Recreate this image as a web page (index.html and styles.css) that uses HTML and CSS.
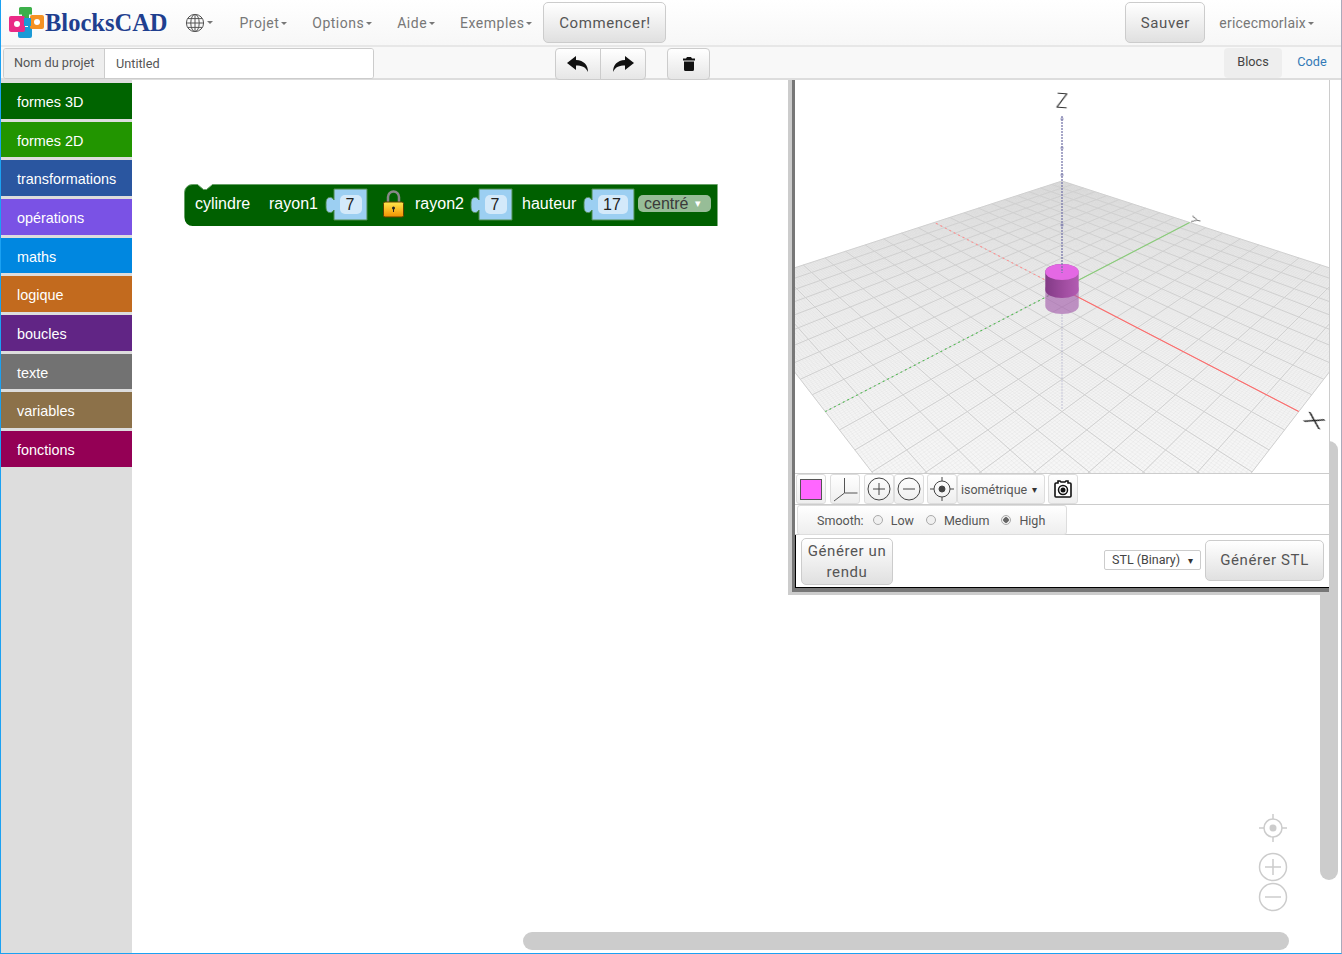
FILE: index.html
```html
<!DOCTYPE html>
<html lang="fr">
<head>
  <meta charset="UTF-8">
  <meta name="viewport" content="width=device-width, initial-scale=1.0">
  <title>BlocksCAD</title>
  <link rel="stylesheet" href="styles.css">
</head>
<body>
<div class="app">

  <nav class="navbar">
    <a class="brand">
      <svg class="brand-icon" width="36" height="32" viewBox="0 0 36 32">
        <path d="M10 1.500a1.500 1.500 0 0 1 1.500-1.500h10a1.500 1.500 0 0 1 1.500 1.500v6h-3v4h-7v-4h-3z" fill="#3cb04a"/>
        <path d="M11 20h8v-2h4v11a2 2 0 0 1-2 2h-10a2 2 0 0 1-2-2v-5a3 3 0 0 1 2-4z" fill="#1b9ad6"/>
        <rect x="0" y="9" width="16" height="16" rx="2" fill="#ea2a86"/>
        <rect x="21" y="8" width="14" height="14" rx="2" fill="#f59222"/>
        <rect x="15" y="11" width="7" height="8" fill="#1b9ad6"/>
        <circle cx="8" cy="17" r="3" fill="#fff"/>
        <circle cx="28" cy="15" r="3" fill="#fff"/>
      </svg>
      <span class="brand-name">BlocksCAD</span>
    </a>
    <a class="nav-globe">
      <svg width="20" height="20" viewBox="0 0 20 20" fill="none" stroke="#555" stroke-width="1">
        <circle cx="10" cy="10" r="8.600"/>
        <ellipse cx="10" cy="10" rx="4.200" ry="8.600"/>
        <path d="M10 1.400v17.200M1.400 10h17.200M2.600 5.600h14.800M2.600 14.400h14.800"/>
      </svg>
      <span class="caret"></span>
    </a>
    <a class="nav-link nav-projet">Projet<span class="caret"></span></a>
    <a class="nav-link">Options<span class="caret"></span></a>
    <a class="nav-link">Aide<span class="caret"></span></a>
    <a class="nav-link">Exemples<span class="caret"></span></a>
    <button class="btn btn-start">Commencer!</button>
    <div class="nav-right">
      <button class="btn btn-save">Sauver</button>
      <a class="nav-link nav-user">ericecmorlaix<span class="caret"></span></a>
    </div>
  </nav>

  <div class="projectbar">
    <div class="project-name">
      <span class="project-label">Nom du projet</span>
      <span class="project-input">Untitled</span>
    </div>
    <div class="edit-tools">
      <button class="tool tool-undo" aria-label="undo">
        <svg width="22" height="18" viewBox="0 0 22 18"><path d="M9 1 0 8l9 7v-4.400c5.500 0 9.500 1.200 12 6.400 0-7-4-11.500-12-12z" fill="#111"/></svg>
      </button>
      <button class="tool tool-redo" aria-label="redo">
        <svg width="22" height="18" viewBox="0 0 22 18"><path d="M13 1l9 7-9 7v-4.400c-5.500 0-9.500 1.200-12 6.400 0-7 4-11.500 12-12z" fill="#111"/></svg>
      </button>
      <button class="tool tool-trash" aria-label="delete">
        <svg width="12" height="14" viewBox="0 0 12 14"><path d="M4 0h4l1 1.500h3v2h-12v-2h3zM1 4.500h10v8a1.500 1.500 0 0 1-1.500 1.500h-7a1.500 1.500 0 0 1-1.500-1.500z" fill="#111"/></svg>
      </button>
    </div>
    <div class="code-tabs">
      <a class="code-tab active">Blocs</a>
      <a class="code-tab">Code</a>
    </div>
  </div>

  <div class="main">
    <ul class="toolbox">
      <li class="cat cat-3d">formes 3D</li>
      <li class="cat cat-2d">formes 2D</li>
      <li class="cat cat-trans">transformations</li>
      <li class="cat cat-ops">opérations</li>
      <li class="cat cat-math">maths</li>
      <li class="cat cat-logic">logique</li>
      <li class="cat cat-loop">boucles</li>
      <li class="cat cat-text">texte</li>
      <li class="cat cat-var">variables</li>
      <li class="cat cat-func">fonctions</li>
    </ul>
    <div class="workspace">
      <svg class="block" width="540" height="46" viewBox="0 0 540 46">
        <defs>
          <linearGradient id="lock-gold" x1="0" y1="0" x2="0" y2="1">
            <stop offset="0" stop-color="#ffe84d"/>
            <stop offset="1" stop-color="#f09000"/>
          </linearGradient>
        </defs>
        <path class="block-body" d="M0.500 8.500a8 8 0 0 1 8-8h5l6 5h3l6-5h505v41.500h-525a8 8 0 0 1-8-8z"/>
        <path class="block-edge" d="M0.500 33.500v-25a8 8 0 0 1 8-8h5l6 5h3l6-5h505"/>

        <text class="block-text" x="11" y="25">cylindre</text>
        <text class="block-text" x="85" y="25">rayon1</text>
        <path class="socket" d="M150 5h33v31h-33v-10c-1 2-3 3-5 2.500c-3-1-3-4-3-7.500s0-6.500 3-7.500c2-.5 4 .5 5 2.500z"/>
        <rect class="field" x="156" y="11" width="22" height="19" rx="5"/>
        <text class="field-text" x="166" y="26">7</text>

        <g transform="translate(199 6)">
          <path d="M5 12V7a5.500 5.500 0 0 1 11 0v5" fill="none" stroke="#888" stroke-width="2.500"/>
          <rect x="0.500" y="12" width="20" height="15" rx="1.500" fill="url(#lock-gold)" stroke="#5c4000"/>
          <circle cx="10.500" cy="18" r="1.500" fill="#222"/>
          <rect x="10" y="18" width="1" height="4" fill="#222"/>
        </g>

        <text class="block-text" x="231" y="25">rayon2</text>
        <path class="socket" d="M295 5h33v31h-33v-10c-1 2-3 3-5 2.500c-3-1-3-4-3-7.500s0-6.500 3-7.500c2-.5 4 .5 5 2.500z"/>
        <rect class="field" x="301" y="11" width="22" height="19" rx="5"/>
        <text class="field-text" x="311" y="26">7</text>

        <text class="block-text" x="338" y="25">hauteur</text>
        <path class="socket" d="M408 5h42v31h-42v-10c-1 2-3 3-5 2.500c-3-1-3-4-3-7.500s0-6.500 3-7.500c2-.5 4 .5 5 2.500z"/>
        <rect class="field" x="414" y="11" width="30" height="19" rx="5"/>
        <text class="field-text" x="428" y="26">17</text>

        <rect class="dropdown" x="454" y="11" width="73" height="17" rx="5"/>
        <text class="dropdown-text" x="460" y="25">centré</text>
        <text class="dropdown-arrow" x="511" y="23">▾</text>
      </svg>

      <div class="zoom-controls">
        <svg width="30" height="100" viewBox="0 0 30 100" fill="none" stroke="#ccc" stroke-width="1.500">
          <circle cx="15" cy="15" r="9"/>
          <circle cx="15" cy="15" r="3.500" fill="#ccc" stroke="none"/>
          <path d="M15 1v5M15 24v5M1 15h5M24 15h5"/>
          <circle cx="15" cy="54" r="13.500"/>
          <path d="M7 54h16M15 46v16"/>
          <circle cx="15" cy="84" r="13.500"/>
          <path d="M7 84h16"/>
        </svg>
      </div>
      <div class="scroll-v"></div>
      <div class="scroll-h"></div>
    </div>
  </div>

  <section class="viewer">
    <div class="viewer-inner">
      <div class="stage">
        <canvas id="floor" width="534" height="393"></canvas>
        <span class="axis-label axis-z">Z</span>
        <span class="axis-label axis-y">Y</span>
        <span class="axis-label axis-x">X</span>
      </div>

      <div class="view-tools">
        <button class="vbtn vbtn-color"><span class="swatch"></span></button>
        <button class="vbtn vbtn-axes">
          <svg width="26" height="26" viewBox="0 0 26 26" fill="none" stroke="#555"><path d="M12.500 2v15M12.500 17h13M12.500 17 2 25"/></svg>
        </button>
        <div class="vgroup">
          <button class="vbtn">
            <svg width="24" height="24" viewBox="0 0 24 24" fill="none" stroke="#444"><circle cx="12" cy="12" r="11"/><path d="M6 12h12M12 6v12"/></svg>
          </button>
          <button class="vbtn">
            <svg width="24" height="24" viewBox="0 0 24 24" fill="none" stroke="#444"><circle cx="12" cy="12" r="11"/><path d="M6 12h12"/></svg>
          </button>
        </div>
        <div class="vgroup vgroup-view">
          <button class="vbtn">
            <svg width="26" height="26" viewBox="0 0 26 26" fill="none" stroke="#444"><circle cx="13" cy="13" r="8"/><circle cx="13" cy="13" r="3" fill="#444"/><path d="M13 1v4M13 21v4M1 13h4M21 13h4"/></svg>
          </button>
          <button class="vbtn vbtn-view">isométrique <span class="tri">▾</span></button>
        </div>
        <button class="vbtn vbtn-camera">
          <svg width="18" height="20" viewBox="0 0 18 20"><path d="M4 2h2l1 1h4l1-1h2v2h2a1 1 0 0 1 1 1v12a1 1 0 0 1-1 1H2a1 1 0 0 1-1-1V5a1 1 0 0 1 1-1h2z" fill="#fff" stroke="#111" stroke-width="1.600"/><circle cx="9" cy="11" r="4.500" fill="#fff" stroke="#111" stroke-width="1.500"/><circle cx="9" cy="11" r="2.500" fill="#111"/></svg>
        </button>
      </div>

      <div class="smooth-row">
        <div class="smooth">
          <span class="smooth-title">Smooth:</span>
          <span class="radio"></span><span class="radio-label">Low</span>
          <span class="radio"></span><span class="radio-label">Medium</span>
          <span class="radio checked"></span><span class="radio-label">High</span>
        </div>
      </div>

      <div class="render-row">
        <button class="btn btn-render">Générer un rendu</button>
        <div class="stl-format">STL (Binary) <span class="tri">▾</span></div>
        <button class="btn btn-stl">Générer STL</button>
      </div>
    </div>
  </section>

</div>
<script src="viewer.js"></script>
</body>
</html>
```

FILE: styles.css
```css
* {
  box-sizing: border-box;
}
html, body {
  margin: 0;
  padding: 0;
}
body {
  font-family: Roboto, "Liberation Sans", sans-serif;
  font-size: 14px;
  color: #555;
  background: #fff;
  overflow: hidden;
}
button {
  font-family: inherit;
  cursor: pointer;
}
.app {
  position: relative;
  width: 1342px;
  height: 954px;
  display: flex;
  flex-direction: column;
  border-left: 1px solid #1ba1f2;
  border-right: 1px solid #aab;
  border-bottom: 1px solid #1ba1f2;
  overflow: hidden;
}

/* top navigation */
.navbar {
  height: 47px;
  flex: none;
  display: flex;
  align-items: center;
  background: linear-gradient(to bottom, #fff, #f7f7f7);
  border-bottom: 2px solid #e7e7e7;
}
.brand {
  display: flex;
  align-items: center;
  margin-left: 8px;
}
.brand-icon {
  margin-top: 1px;
}
.brand-name {
  font-family: "Liberation Serif", serif;
  font-weight: bold;
  font-size: 24.500px;
  color: #1f3f8f;
  letter-spacing: 0;
}
.nav-globe {
  display: flex;
  align-items: center;
  margin-left: 17px;
  width: 37px;
}
.caret {
  display: inline-block;
  margin-left: 2px;
  border-top: 3px solid #777;
  border-left: 3px solid transparent;
  border-right: 3px solid transparent;
  vertical-align: middle;
}
.nav-link {
  color: #777;
  font-size: 14px;
  letter-spacing: 0.5px;
  margin-left: 25px;
  white-space: nowrap;
}
.nav-projet {
  margin-left: 18px;
}
.btn {
  background: linear-gradient(to bottom, #fff, #e0e0e0);
  border: 1px solid #ccc;
  border-radius: 5px;
  color: #555;
  font-size: 15px;
  letter-spacing: 0.6px;
}
.btn-start {
  width: 123px;
  height: 41px;
  margin-left: 11px;
}
.nav-right {
  margin-left: auto;
  display: flex;
  align-items: center;
  padding-right: 27px;
}
.btn-save {
  width: 80px;
  height: 41px;
}
.nav-user {
  margin-left: 14px;
  letter-spacing: 0.2px;
}

/* project name and edit buttons */
.projectbar {
  height: 33px;
  flex: none;
  position: relative;
  display: flex;
  background: #f8f8f8;
  border-bottom: 2px solid #ddd;
  padding-left: 2px;
}
.project-name {
  display: flex;
  width: 371px;
  height: 31px;
  margin-top: 1px;
  border: 1px solid #ccc;
  border-radius: 3px;
  overflow: hidden;
  font-size: 12.700px;
}
.project-label {
  width: 101px;
  background: #eee;
  border-right: 1px solid #ccc;
  line-height: 28px;
  padding-left: 10px;
  color: #555;
}
.project-input {
  flex: 1;
  background: #fff;
  line-height: 29px;
  padding-left: 11px;
}
.edit-tools {
  display: flex;
  margin-left: 181px;
  margin-top: 1px;
}
.tool {
  height: 32px;
  background: linear-gradient(to bottom, #fff, #e6e6e6);
  border: 1px solid #ccc;
  display: flex;
  align-items: center;
  justify-content: center;
  padding: 0;
}
.tool-undo {
  width: 46px;
  border-radius: 4px 0 0 4px;
}
.tool-redo {
  width: 46px;
  margin-left: -1px;
  border-radius: 0 4px 4px 0;
}
.tool-trash {
  width: 43px;
  margin-left: 21px;
  border-radius: 4px;
}
.code-tabs {
  margin-left: auto;
  display: flex;
  margin-top: 1px;
  font-size: 12.700px;
}
.code-tab {
  width: 58px;
  height: 30px;
  line-height: 28px;
  text-align: center;
  color: #337ab7;
  border-radius: 4px;
}
.code-tab.active {
  background: #eee;
  color: #444;
  margin-right: 1px;
}

/* blocks toolbox */
.main {
  flex: 1;
  display: flex;
  min-height: 0;
}
.toolbox {
  list-style: none;
  margin: 0;
  padding: 3px 0 0;
  width: 131px;
  flex: none;
  background: #ddd;
}
.cat {
  height: 35.670px;
  margin-bottom: 3px;
  line-height: 38px;
  padding-left: 16px;
  color: #fff;
  font-family: "Liberation Sans", Arial, sans-serif;
  font-size: 14.400px;
}
.cat-3d { background: #006400; }
.cat-2d { background: #229500; }
.cat-trans { background: #2a56a0; }
.cat-ops { background: #7a52e5; }
.cat-math { background: #0087e0; }
.cat-logic { background: #c26a1e; }
.cat-loop { background: #612585; }
.cat-text { background: #727272; }
.cat-var { background: #8c7149; }
.cat-func { background: #940055; }

/* workspace */
.workspace {
  flex: 1;
  position: relative;
  background: #fff;
}
.block {
  position: absolute;
  left: 52px;
  top: 104px;
}
.block-body {
  fill: #006000;
}
.block-edge {
  fill: none;
  stroke: #66a066;
  stroke-width: 1;
}
.block-text {
  font-family: "Liberation Sans", Arial, sans-serif;
  font-size: 16px;
  fill: #fff;
}
.socket {
  fill: #9ccff2;
  stroke: #4d8a4d;
  stroke-width: 1;
}
.field {
  fill: #d3e9fa;
}
.field-text {
  font-family: "Liberation Sans", Arial, sans-serif;
  font-size: 16px;
  fill: #222;
  text-anchor: middle;
}
.dropdown {
  fill: #97bd97;
}
.dropdown-text {
  font-family: "Liberation Sans", Arial, sans-serif;
  font-size: 16px;
  fill: #3a3a3a;
}
.dropdown-arrow {
  font-size: 11px;
  fill: #fff;
}
.zoom-controls {
  position: absolute;
  left: 1126px;
  top: 733px;
  line-height: 0;
}
.scroll-v {
  position: absolute;
  left: 1188px;
  top: 361px;
  width: 18px;
  height: 439px;
  border-radius: 9px;
  background: #ccc;
}
.scroll-h {
  position: absolute;
  left: 391px;
  top: 852px;
  width: 766px;
  height: 18px;
  border-radius: 9px;
  background: #ccc;
}

/* floating 3D viewer */
.viewer {
  position: absolute;
  left: 787px;
  top: 80px;
  width: 542px;
  height: 515px;
  border-left: 4px solid #ccc;
  border-bottom: 3px solid #ccc;
  border-right: 1px solid #ccc;
}
.viewer-inner {
  height: 100%;
  display: flex;
  flex-direction: column;
  background: #fff;
  border-left: 3px solid #777;
  border-bottom: 4px solid #777;
}
.stage {
  position: relative;
  height: 393px;
  flex: none;
  overflow: hidden;
}
#floor {
  display: block;
}
.axis-label {
  position: absolute;
  font-family: Roboto, sans-serif;
  font-weight: 300;
  line-height: 1;
  color: #333;
}
.axis-z {
  left: 261px;
  top: 11px;
  font-size: 20px;
  transform: rotate(4deg);
}
.axis-y {
  left: 398px;
  top: 134px;
  font-size: 12px;
  transform: rotate(-76deg);
  color: #444;
}
.axis-x {
  left: 513px;
  top: 331px;
  font-size: 20px;
  transform: matrix(1.59, .82, -.39, .64, 0, 0);
  color: #111;
}
.view-tools {
  height: 32px;
  flex: none;
  display: flex;
  gap: 4px;
  padding-left: 1px;
  border-top: 1px solid #ccc;
  border-bottom: 1px solid #ccc;
}
.vgroup {
  display: flex;
}
.vgroup-view {
  margin-left: -1px;
  margin-right: -1px;
}
.vbtn {
  width: 30px;
  height: 30px;
  padding: 0;
  background: linear-gradient(to bottom, #fff, #eee);
  border: 1px solid #ddd;
  border-radius: 3px;
  display: flex;
  align-items: center;
  justify-content: center;
  color: #555;
  font-size: 12.500px;
}
.swatch {
  width: 22px;
  height: 21px;
  background: #ff66ff;
  border: 1px solid #555;
}
.vbtn-view {
  width: 88px;
  justify-content: flex-start;
  padding-left: 3px;
  white-space: nowrap;
}
.tri {
  font-size: 10px;
  color: #333;
  margin-left: 5px;
}
.smooth-row {
  height: 30px;
  flex: none;
  border-bottom: 1px solid #ccc;
}
.smooth {
  width: 270px;
  margin-left: 2px;
  height: 30px;
  display: flex;
  align-items: center;
  padding-left: 19px;
  background: linear-gradient(to bottom, #fff, #eee);
  border: 1px solid #ddd;
  border-radius: 3px;
  font-size: 12.500px;
}
.smooth-title {
  margin-right: 9px;
}
.radio {
  width: 10px;
  height: 10px;
  border: 1px solid #aaa;
  border-radius: 50%;
  background: #f0f0f0;
}
.radio.checked {
  background: radial-gradient(circle, #666 0 2.500px, #f0f0f0 3px);
}
.radio-label {
  margin-left: 8px;
  margin-right: 12px;
}
.render-row {
  flex: 1;
  display: flex;
  align-items: center;
  padding: 0 5px 2px 5px;
  border-left: 1px solid #000;
  border-bottom: 1px solid #000;
  position: relative;
}
.btn-render {
  width: 92px;
  height: 47px;
  padding: 2px 0 0;
  margin-top: 2px;
  line-height: 21px;
}
.stl-format {
  margin-left: auto;
  width: 97px;
  height: 20px;
  line-height: 18px;
  border: 1px solid #ccc;
  border-radius: 2px;
  padding-left: 7px;
  font-size: 12.500px;
  color: #444;
}
.btn-stl {
  width: 119px;
  height: 41px;
  margin-left: 4px;
  padding: 0;
}
```

FILE: viewer.js
```js
// floor of the 3D view, drawn with a perspective mapping of the unit square
const ctx = document.getElementById("floor").getContext("2d");
const OX = 795, OY = 80;

const T = [1062 - OX, 181 - OY], R = [1393.7 - OX, 288.7 - OY];
const B = [1062 - OX, 718 - OY], L = [730.3 - OX, 288.7 - OY];

const dx1 = R[0] - B[0], dx2 = L[0] - B[0], dx3 = T[0] - R[0] + B[0] - L[0];
const dy1 = R[1] - B[1], dy2 = L[1] - B[1], dy3 = T[1] - R[1] + B[1] - L[1];
const den = dx1 * dy2 - dx2 * dy1;
const g = (dx3 * dy2 - dx2 * dy3) / den;
const h = (dx1 * dy3 - dx3 * dy1) / den;
const a = R[0] - T[0] + g * R[0], b = L[0] - T[0] + h * L[0];
const d = R[1] - T[1] + g * R[1], e = L[1] - T[1] + h * L[1];

function project(u, v) {
  const w = g * u + h * v + 1;
  return [(a * u + b * v + T[0]) / w, (d * u + e * v + T[1]) / w];
}

function line(p, q) {
  ctx.beginPath();
  ctx.moveTo(p[0], p[1]);
  ctx.lineTo(q[0], q[1]);
  ctx.stroke();
}

// floor fill
let fill = ctx.createLinearGradient(0, T[1], 0, 393);
fill.addColorStop(0, "#e7e7e7");
fill.addColorStop(0.4, "#f0f0f0");
fill.addColorStop(1, "#f6f6f6");
ctx.fillStyle = fill;
ctx.beginPath();
ctx.moveTo(T[0], T[1]);
ctx.lineTo(R[0], R[1]);
ctx.lineTo(B[0], B[1]);
ctx.lineTo(L[0], L[1]);
ctx.closePath();
ctx.fill();

// grid
const MAJOR = 20, MINOR = 200;
ctx.lineWidth = 0.5;
ctx.strokeStyle = "rgba(190,190,190,0.25)";
for (let i = 0; i <= MINOR; i++) {
  line(project(i / MINOR, 0), project(i / MINOR, 1));
  line(project(0, i / MINOR), project(1, i / MINOR));
}
ctx.lineWidth = 1;
ctx.strokeStyle = "#d0d0d0";
for (let i = 0; i <= MAJOR; i++) {
  line(project(i / MAJOR, 0), project(i / MAJOR, 1));
  line(project(0, i / MAJOR), project(1, i / MAJOR));
}

// axes
const O = project(0.5, 0.5);
ctx.lineWidth = 1.1;
ctx.setLineDash([]);
ctx.strokeStyle = "#ff6a6a";
line(O, project(1, 0.5));
ctx.strokeStyle = "#88cc77";
line(O, project(0.5, 0));
ctx.setLineDash([2, 3]);
ctx.strokeStyle = "#ff9090";
line(O, project(0, 0.5));
ctx.strokeStyle = "#55bb55";
line(O, project(0.5, 1));
ctx.setLineDash([2, 1]);
ctx.lineWidth = 1.5;
ctx.strokeStyle = "rgba(125,125,175,0.25)";
line([O[0], 314 - OY], [O[0], 410 - OY]);

// cylinder, reflection first
const cx = O[0];
const rx = 16.7, ry = 8;
function barrel(top, bottom) {
  ctx.beginPath();
  ctx.ellipse(cx, top, rx, ry, 0, Math.PI, 0);
  ctx.lineTo(cx + rx, bottom);
  ctx.ellipse(cx, bottom, rx, ry, 0, 0, Math.PI);
  ctx.closePath();
}
barrel(289 - OY, 306 - OY);
ctx.fillStyle = "rgba(165,95,172,0.65)";
ctx.setLineDash([]);
ctx.fill();
barrel(272 - OY, 290 - OY);
fill = ctx.createLinearGradient(cx - rx, 0, cx + rx, 0);
fill.addColorStop(0, "#823a86");
fill.addColorStop(0.6, "#a24ea2");
fill.addColorStop(1, "#b25cb2");
ctx.fillStyle = fill;
ctx.fill();
ctx.beginPath();
ctx.ellipse(cx, 272 - OY, rx, ry, 0, 0, Math.PI * 2);
ctx.fillStyle = "#e468e4";
ctx.fill();

// Z axis over everything
ctx.setLineDash([2, 1]);
ctx.lineWidth = 2;
ctx.strokeStyle = "rgba(120,120,170,0.65)";
line([cx, 116 - OY], [cx, 273 - OY]);
ctx.fillStyle = "rgba(120,120,170,0.5)";
[119, 148, 175, 225].forEach(y => {
  ctx.beginPath();
  ctx.arc(cx, y - OY, 1.8, 0, Math.PI * 2);
  ctx.fill();
});
```
